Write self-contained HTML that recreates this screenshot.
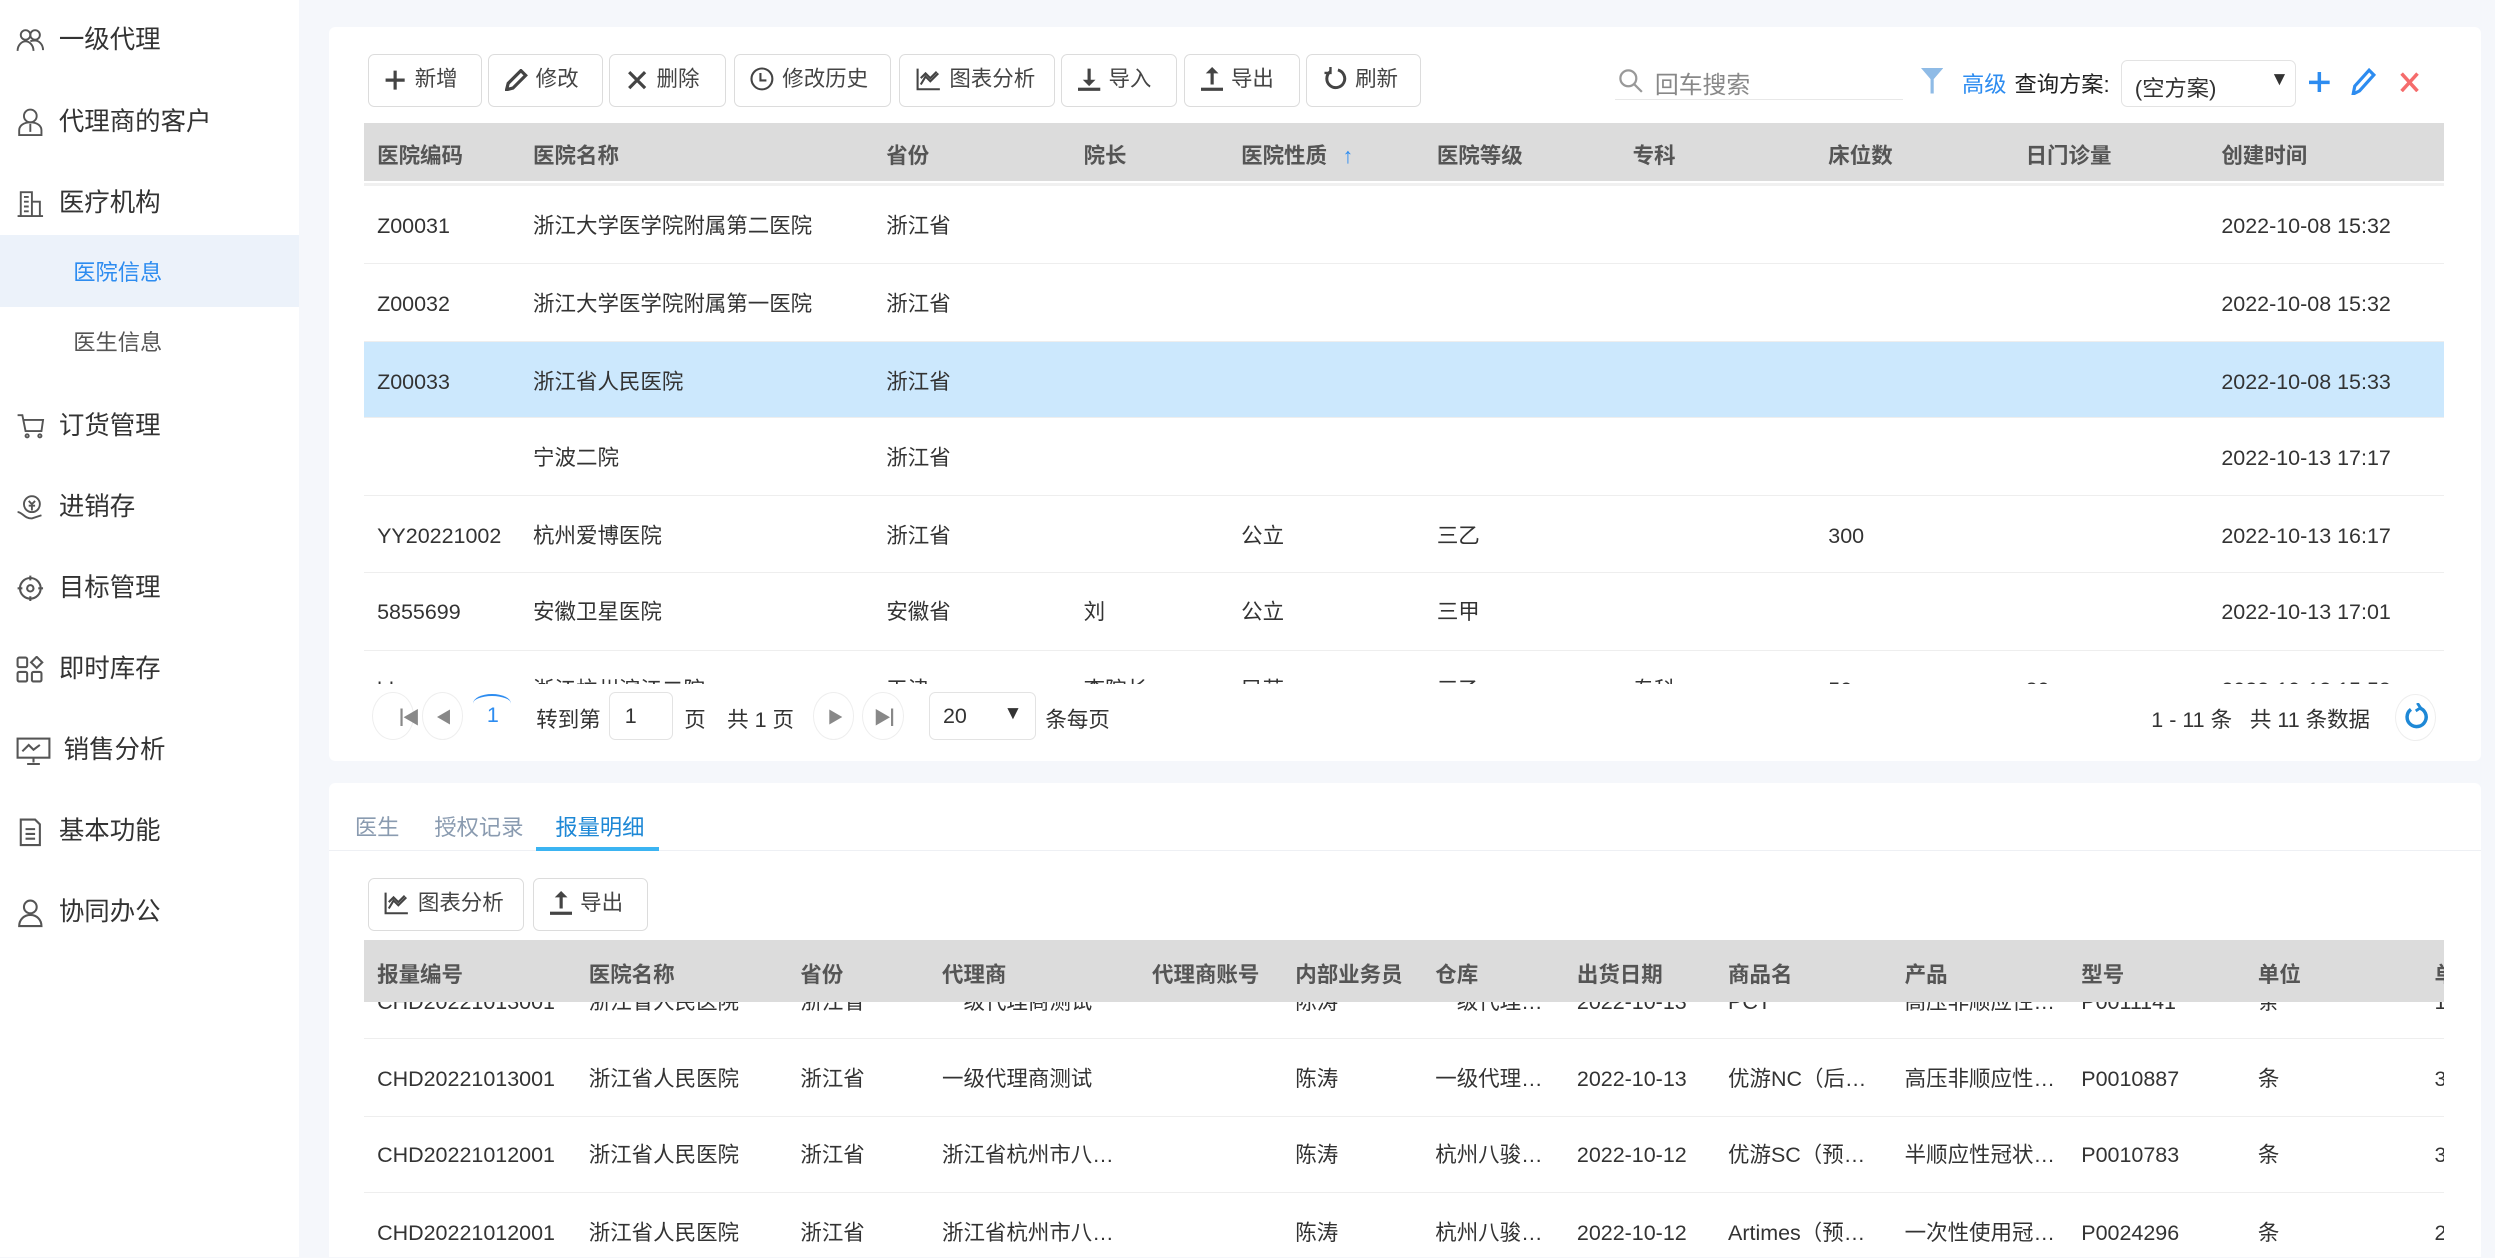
<!DOCTYPE html>
<html><head><meta charset="utf-8"><style>
*{box-sizing:border-box;margin:0;padding:0}
html,body{width:2495px;height:1258px;overflow:hidden;background:#f5f7fb}
#w{position:absolute;left:0;top:0;width:1568px;height:790px;overflow:hidden;zoom:1.5912;font-family:"Liberation Sans","Noto Sans CJK SC",sans-serif;color:#333;font-size:13.5px}
.a{position:absolute;white-space:nowrap}
.side{position:absolute;left:0;top:0;width:188px;height:790px;background:#fff}
.mi{position:absolute;left:37px;font-size:16px;color:#333;line-height:20px;margin-top:2px}
.ic{position:absolute;left:10px;width:18px;height:18px;margin-top:2px}
.panel{position:absolute;left:207px;width:1352px;background:#fff;border-radius:4px}
.btn{position:absolute;height:33px;border:1px solid #dcdcdc;border-radius:4px;background:#fff;font-size:13.5px;color:#444;line-height:31px;padding-left:10px}
.btn svg{vertical-align:-3px;margin-right:5px}
.hdr{position:absolute;left:229px;width:1307px;background:#dcdcdc;font-weight:bold;color:#555}
.row{position:absolute;left:229px;width:1307px;border-bottom:1px solid #eee}
.c{position:absolute;white-space:nowrap;line-height:20px;margin-top:1.5px}
.circ{position:absolute;width:26px;height:30px;border:1px solid #eee;border-radius:50%;top:435px}
</style></head><body><div id="w">
<div class="side">
 <svg class="ic" style="top:15px" viewBox="0 0 18 18" fill="none" stroke="#555" stroke-width="1.2"><circle cx="6" cy="5" r="3"/><circle cx="12" cy="5" r="3"/><path d="M1 15c0-4 3-6 5-6s5 2 5 6M9 9c1-.5 2-.5 3-.5 2 0 5 2 5 6"/></svg>
 <div class="mi" style="top:14px">一级代理</div>
 <svg class="ic" style="top:66px" viewBox="0 0 18 18" fill="none" stroke="#555" stroke-width="1.2"><circle cx="9" cy="5" r="4"/><path d="M2 17v-3c0-3 3-5 7-5s7 2 7 5v3zM9 10v5"/></svg>
 <div class="mi" style="top:65px">代理商的客户</div>
 <svg class="ic" style="top:117px" viewBox="0 0 18 18" fill="none" stroke="#555" stroke-width="1.2"><path d="M3 17V2h7v15M10 8h5v9M1 17h16M5 5h3M5 8h3M5 11h3M5 14h3"/></svg>
 <div class="mi" style="top:116px">医疗机构</div>
 <div class="a" style="left:0;top:148px;width:188px;height:45px;background:#ecf2fa"></div>
 <div class="a" style="left:46px;top:160px;font-size:14px;color:#2d8cf0">医院信息</div>
 <div class="a" style="left:46px;top:204px;font-size:14px;color:#555">医生信息</div>
 <svg class="ic" style="top:257px" viewBox="0 0 18 18" fill="none" stroke="#555" stroke-width="1.2"><path d="M1 2h3l2 10h10l1-7H5"/><circle cx="7" cy="15" r="1"/><circle cx="15" cy="15" r="1"/></svg>
 <div class="mi" style="top:256px">订货管理</div>
 <svg class="ic" style="top:308px" viewBox="0 0 18 18" fill="none" stroke="#555" stroke-width="1.2"><circle cx="10" cy="7" r="5"/><path d="M8 5l2 2 2-2M10 7v4M8 8h4M1 12c3 0 4 4 9 4l6-2"/></svg>
 <div class="mi" style="top:307px">进销存</div>
 <svg class="ic" style="top:359px" viewBox="0 0 18 18" fill="none" stroke="#555" stroke-width="1.3"><circle cx="9" cy="9" r="6.5"/><circle cx="9" cy="9" r="2"/><path d="M9 1v3M9 14v3M1 9h3M14 9h3"/></svg>
 <div class="mi" style="top:358px">目标管理</div>
 <svg class="ic" style="top:410px" viewBox="0 0 18 18" fill="none" stroke="#555" stroke-width="1.3"><rect x="1" y="1" width="6" height="6" rx="1"/><rect x="1" y="10" width="6" height="6" rx="1"/><rect x="10" y="10" width="6" height="6" rx="1"/><path d="M13 0.5l3.5 3.5-3.5 3.5-3.5-3.5z"/></svg>
 <div class="mi" style="top:409px">即时库存</div>
 <svg class="ic" style="top:461px;width:22px" viewBox="0 0 22 18" fill="none" stroke="#555" stroke-width="1.3"><rect x="1" y="1" width="20" height="12"/><path d="M4 9l4-4 3 3 4-3M11 13v3M7 17h8"/></svg>
 <div class="mi" style="top:460px;left:40px">销售分析</div>
 <svg class="ic" style="top:512px" viewBox="0 0 18 18" fill="none" stroke="#555" stroke-width="1.3"><path d="M3 1h9l3 3v13H3zM6 7h6M6 10h6M6 13h6"/></svg>
 <div class="mi" style="top:511px">基本功能</div>
 <svg class="ic" style="top:563px" viewBox="0 0 18 18" fill="none" stroke="#555" stroke-width="1.3"><circle cx="9" cy="5" r="4"/><path d="M2 17c0-4 3-7 7-7s7 3 7 7z"/></svg>
 <div class="mi" style="top:562px">协同办公</div>
</div>

<div class="panel" style="top:17px;height:461px"></div>
<div class="btn" style="left:231px;top:34px;width:72px"><svg width="14" height="14" viewBox="0 0 14 14" stroke="#444" stroke-width="2"><path d="M7 1v12M1 7h12"/></svg>新增</div>
<div class="btn" style="left:307px;top:34px;width:72px"><svg width="14" height="14" viewBox="0 0 14 14" fill="none" stroke="#444" stroke-width="2"><path d="M1 13l1-4 8-8 3 3-8 8z"/></svg>修改</div>
<div class="btn" style="left:383px;top:34px;width:73px"><svg width="14" height="14" viewBox="0 0 14 14" stroke="#444" stroke-width="2"><path d="M2 2l10 10M12 2L2 12"/></svg>删除</div>
<div class="btn" style="left:461px;top:34px;width:99px"><svg width="15" height="15" viewBox="0 0 16 16" fill="none" stroke="#444" stroke-width="1.4"><circle cx="8" cy="8" r="7"/><path d="M7 4v5h4"/></svg>修改历史</div>
<div class="btn" style="left:565px;top:34px;width:98px"><svg width="16" height="15" viewBox="0 0 16 15" fill="none" stroke="#444" stroke-width="1.3"><path d="M1 1v13h14M3 11l3-5 3 3 5-5M3 7l3-3 3 3 4-4"/></svg>图表分析</div>
<div class="btn" style="left:667px;top:34px;width:73px"><svg width="14" height="15" viewBox="0 0 14 15" fill="#444"><path d="M6 1h2v7h3l-4 4-4-4h3z"/><rect x="0" y="13" width="14" height="2"/></svg>导入</div>
<div class="btn" style="left:744px;top:34px;width:73px"><svg width="14" height="15" viewBox="0 0 14 15" fill="#444"><path d="M7 0l4 4H8v7H6V4H3z"/><rect x="0" y="13" width="14" height="2"/></svg>导出</div>
<div class="btn" style="left:821px;top:34px;width:72px"><svg width="15" height="15" viewBox="0 0 16 16" fill="none" stroke="#444" stroke-width="2"><path d="M5 3a6 6 0 1 0 5-1"/><path d="M5 0v4H1" stroke-width="1.6"/></svg>刷新</div>

<svg class="a" style="left:1017px;top:43px" width="16" height="16" viewBox="0 0 16 16" fill="none" stroke="#999" stroke-width="1.4"><circle cx="6.5" cy="6.5" r="5"/><path d="M10 10l5 5"/></svg>
<div class="a" style="left:1040px;top:41px;font-size:15px;color:#888">回车搜索</div>
<div class="a" style="left:1015px;top:62px;width:181px;height:1px;background:#e8e8e8"></div>
<svg class="a" style="left:1207px;top:43px" width="14" height="16" viewBox="0 0 14 16" fill="#8fbbe6"><path d="M0 0h14L8 7v9H6V7z"/></svg>
<div class="a" style="left:1233px;top:42px;color:#2d8cf0;font-size:14px">高级</div>
<div class="a" style="left:1266px;top:42px;font-size:14px;color:#222">查询方案:</div>
<div class="a" style="left:1333px;top:38px;width:110px;height:29px;border:1px solid #e3e3e3;border-radius:4px;padding:6px 0 0 8px;font-size:14px">(空方案)<span class="a" style="left:93px;top:5px;font-size:12px">▼</span></div>
<svg class="a" style="left:1451px;top:45px" width="13" height="13" viewBox="0 0 13 13" stroke="#2d8cf0" stroke-width="2.2"><path d="M6.5 0v13M0 6.5h13"/></svg>
<svg class="a" style="left:1477px;top:42px" width="17" height="18" viewBox="0 0 17 18" fill="none" stroke="#2d8cf0" stroke-width="2"><path d="M2 17l1-5 9-10 3 3-9 10z"/></svg>
<svg class="a" style="left:1508px;top:45px" width="12" height="13" viewBox="0 0 12 13" stroke="#f56c6c" stroke-width="2.2"><path d="M1 1l10 11M11 1L1 12"/></svg>

<div style="position:absolute;left:0;top:0;width:1568px;height:430px;overflow:hidden">
<div class="hdr" style="top:77px;height:37px"></div>
<div class="row" style="top:117px;height:49px"></div>
<div class="row" style="top:166px;height:49px"></div>
<div class="row" style="top:215px;height:48px;background:#cce8fd"></div>
<div class="row" style="top:263px;height:49px"></div>
<div class="row" style="top:312px;height:48px"></div>
<div class="row" style="top:360px;height:49px"></div>
<div class="row" style="top:409px;height:49px"></div>
<div class="a" style="left:229px;top:115px;width:1307px;height:2px;background:#f0f0f0"></div>
<div style="font-weight:bold;color:#555">
<div class="c" style="left:237px;top:87px">医院编码</div><div class="c" style="left:335px;top:87px">医院名称</div><div class="c" style="left:557px;top:87px">省份</div><div class="c" style="left:681px;top:87px">院长</div><div class="c" style="left:780px;top:87px">医院性质 <span style="color:#2d8cf0;margin-left:6px">↑</span></div><div class="c" style="left:903px;top:87px">医院等级</div><div class="c" style="left:1026px;top:87px">专科</div><div class="c" style="left:1149px;top:87px">床位数</div><div class="c" style="left:1273px;top:87px">日门诊量</div><div class="c" style="left:1396px;top:87px">创建时间</div>
</div>
<div class="c" style="left:237px;top:131px">Z00031</div><div class="c" style="left:335px;top:131px">浙江大学医学院附属第二医院</div><div class="c" style="left:557px;top:131px">浙江省</div><div class="c" style="left:1396px;top:131px">2022-10-08 15:32</div>
<div class="c" style="left:237px;top:180px">Z00032</div><div class="c" style="left:335px;top:180px">浙江大学医学院附属第一医院</div><div class="c" style="left:557px;top:180px">浙江省</div><div class="c" style="left:1396px;top:180px">2022-10-08 15:32</div>
<div class="c" style="left:237px;top:229px">Z00033</div><div class="c" style="left:335px;top:229px">浙江省人民医院</div><div class="c" style="left:557px;top:229px">浙江省</div><div class="c" style="left:1396px;top:229px">2022-10-08 15:33</div>
<div class="c" style="left:335px;top:277px">宁波二院</div><div class="c" style="left:557px;top:277px">浙江省</div><div class="c" style="left:1396px;top:277px">2022-10-13 17:17</div>
<div class="c" style="left:237px;top:326px">YY20221002</div><div class="c" style="left:335px;top:326px">杭州爱博医院</div><div class="c" style="left:557px;top:326px">浙江省</div><div class="c" style="left:780px;top:326px">公立</div><div class="c" style="left:903px;top:326px">三乙</div><div class="c" style="left:1149px;top:326px">300</div><div class="c" style="left:1396px;top:326px">2022-10-13 16:17</div>
<div class="c" style="left:237px;top:374px">5855699</div><div class="c" style="left:335px;top:374px">安徽卫星医院</div><div class="c" style="left:557px;top:374px">安徽省</div><div class="c" style="left:681px;top:374px">刘</div><div class="c" style="left:780px;top:374px">公立</div><div class="c" style="left:903px;top:374px">三甲</div><div class="c" style="left:1396px;top:374px">2022-10-13 17:01</div>
<div class="c" style="left:237px;top:423px">hh</div><div class="c" style="left:335px;top:423px">浙江杭州滨江二院</div><div class="c" style="left:557px;top:423px">天津</div><div class="c" style="left:681px;top:423px">李院长</div><div class="c" style="left:780px;top:423px">民营</div><div class="c" style="left:903px;top:423px">三乙</div><div class="c" style="left:1026px;top:423px">专科</div><div class="c" style="left:1149px;top:423px">50</div><div class="c" style="left:1273px;top:423px">80</div><div class="c" style="left:1396px;top:423px">2022-10-13 15:58</div>
</div>

<div class="circ" style="left:234px"></div><div class="a" style="left:242px;top:443px;font-size:11px;color:#888">▕◀</div>
<div class="circ" style="left:265px"></div><div class="a" style="left:274px;top:443px;font-size:10px;color:#888">◀</div>
<div class="a" style="left:297px;top:436px;width:24px;height:12px;border-top:1.5px solid #2d8cf0;border-radius:50% 50% 0 0"></div>
<div class="a" style="left:306px;top:442px;color:#2d8cf0">1</div>
<div class="a" style="left:337px;top:442px">转到第</div>
<div class="a" style="left:383px;top:435px;width:40px;height:30px;border:1px solid #e3e3e3;border-radius:4px;padding:7px 0 0 9px">1</div>
<div class="a" style="left:430px;top:442px">页</div>
<div class="a" style="left:457px;top:442px">共 1 页</div>
<div class="circ" style="left:511px"></div><div class="a" style="left:520px;top:443px;font-size:10px;color:#888">▶</div>
<div class="circ" style="left:542px"></div><div class="a" style="left:549px;top:443px;font-size:11px;color:#888">▶▏</div>
<div class="a" style="left:584px;top:435px;width:67px;height:30px;border:1px solid #e3e3e3;border-radius:4px;padding:7px 0 0 8px">20<span class="a" style="left:46px;top:6px;font-size:12px">▼</span></div>
<div class="a" style="left:657px;top:442px">条每页</div>
<div class="a" style="left:1352px;top:442px">1 - 11 条 &nbsp;&nbsp;共 11 条数据</div>
<div class="a" style="left:1505px;top:436px;width:26px;height:30px;border:1px solid #eee;border-radius:50%"></div>
<svg class="a" style="left:1510px;top:442px" width="16" height="17" viewBox="0 0 16 17" fill="none" stroke="#1e88d6" stroke-width="2.2"><path d="M5 4a6 6 0 1 0 5-1"/><path d="M9 0l2 3-3 2" stroke-width="1.8"/></svg>

<div class="panel" style="top:492px;height:310px"></div>
<div class="a" style="left:223px;top:509px;color:#8a9bb0;font-size:14px">医生</div>
<div class="a" style="left:273px;top:509px;color:#8a9bb0;font-size:14px">授权记录</div>
<div class="a" style="left:349px;top:509px;color:#1e88d6;font-size:14px">报量明细</div>
<div class="a" style="left:207px;top:534px;width:1352px;height:1px;background:#eef0f4"></div>
<div class="a" style="left:337px;top:532px;width:77px;height:3px;background:#3bb4f2"></div>
<div class="btn" style="left:231px;top:552px;width:98px"><svg width="16" height="15" viewBox="0 0 16 15" fill="none" stroke="#444" stroke-width="1.3"><path d="M1 1v13h14M3 11l3-5 3 3 5-5M3 7l3-3 3 3 4-4"/></svg>图表分析</div>
<div class="btn" style="left:335px;top:552px;width:72px"><svg width="14" height="15" viewBox="0 0 14 15" fill="#444"><path d="M7 0l4 4H8v7H6V4H3z"/><rect x="0" y="13" width="14" height="2"/></svg>导出</div>

<div style="position:absolute;left:0;top:591px;width:1536px;height:200px;overflow:hidden">
<div class="c" style="left:237px;top:28px">CHD20221013001</div><div class="c" style="left:370px;top:28px">浙江省人民医院</div><div class="c" style="left:503px;top:28px">浙江省</div><div class="c" style="left:592px;top:28px">一级代理商测试</div><div class="c" style="left:814px;top:28px">陈涛</div><div class="c" style="left:902px;top:28px">一级代理…</div><div class="c" style="left:991px;top:28px">2022-10-13</div><div class="c" style="left:1086px;top:28px">PCT</div><div class="c" style="left:1197px;top:28px">高压非顺应性…</div><div class="c" style="left:1308px;top:28px">P0011141</div><div class="c" style="left:1419px;top:28px">条</div><div class="c" style="left:1530px;top:28px">1</div>
<div class="row" style="top:40px;height:22px"></div>
<div class="hdr" style="top:0;height:39px"></div>
<div style="font-weight:bold;color:#555">
<div class="c" style="left:237px;top:11px">报量编号</div><div class="c" style="left:370px;top:11px">医院名称</div><div class="c" style="left:503px;top:11px">省份</div><div class="c" style="left:592px;top:11px">代理商</div><div class="c" style="left:724px;top:11px">代理商账号</div><div class="c" style="left:814px;top:11px">内部业务员</div><div class="c" style="left:902px;top:11px">仓库</div><div class="c" style="left:991px;top:11px">出货日期</div><div class="c" style="left:1086px;top:11px">商品名</div><div class="c" style="left:1197px;top:11px">产品</div><div class="c" style="left:1308px;top:11px">型号</div><div class="c" style="left:1419px;top:11px">单位</div><div class="c" style="left:1530px;top:11px">单价</div>
</div>
<div class="row" style="top:62px;height:49px"></div>
<div class="row" style="top:111px;height:48px"></div>
<div class="c" style="left:237px;top:76px">CHD20221013001</div><div class="c" style="left:370px;top:76px">浙江省人民医院</div><div class="c" style="left:503px;top:76px">浙江省</div><div class="c" style="left:592px;top:76px">一级代理商测试</div><div class="c" style="left:814px;top:76px">陈涛</div><div class="c" style="left:902px;top:76px">一级代理…</div><div class="c" style="left:991px;top:76px">2022-10-13</div><div class="c" style="left:1086px;top:76px">优游NC（后…</div><div class="c" style="left:1197px;top:76px">高压非顺应性…</div><div class="c" style="left:1308px;top:76px">P0010887</div><div class="c" style="left:1419px;top:76px">条</div><div class="c" style="left:1530px;top:76px">3</div>
<div class="c" style="left:237px;top:124px">CHD20221012001</div><div class="c" style="left:370px;top:124px">浙江省人民医院</div><div class="c" style="left:503px;top:124px">浙江省</div><div class="c" style="left:592px;top:124px">浙江省杭州市八…</div><div class="c" style="left:814px;top:124px">陈涛</div><div class="c" style="left:902px;top:124px">杭州八骏…</div><div class="c" style="left:991px;top:124px">2022-10-12</div><div class="c" style="left:1086px;top:124px">优游SC（预…</div><div class="c" style="left:1197px;top:124px">半顺应性冠状…</div><div class="c" style="left:1308px;top:124px">P0010783</div><div class="c" style="left:1419px;top:124px">条</div><div class="c" style="left:1530px;top:124px">3</div>
<div class="c" style="left:237px;top:173px">CHD20221012001</div><div class="c" style="left:370px;top:173px">浙江省人民医院</div><div class="c" style="left:503px;top:173px">浙江省</div><div class="c" style="left:592px;top:173px">浙江省杭州市八…</div><div class="c" style="left:814px;top:173px">陈涛</div><div class="c" style="left:902px;top:173px">杭州八骏…</div><div class="c" style="left:991px;top:173px">2022-10-12</div><div class="c" style="left:1086px;top:173px">Artimes（预…</div><div class="c" style="left:1197px;top:173px">一次性使用冠…</div><div class="c" style="left:1308px;top:173px">P0024296</div><div class="c" style="left:1419px;top:173px">条</div><div class="c" style="left:1530px;top:173px">2</div>
</div>
</div></body></html>
